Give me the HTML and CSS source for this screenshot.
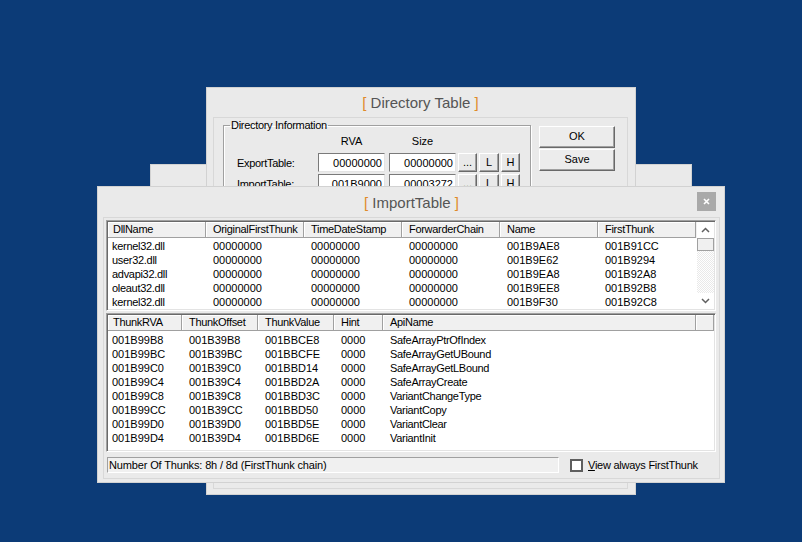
FILE: index.html
```html
<!DOCTYPE html>
<html>
<head>
<meta charset="utf-8">
<link rel="stylesheet" href="styles.css">
</head>
<body>
<div class="desktop">
  <div class="win win-back"></div>

  <div class="win win-dir">
    <div class="title"><span class="br">[</span> Directory Table <span class="br">]</span></div>
    <div class="panel dir-panel">
      <fieldset class="group">
        <legend>Directory Information</legend>
        <div class="drow dhead">
          <span class="dlabel"></span>
          <span class="dcol">RVA</span>
          <span class="dcol dcol2">Size</span>
        </div>
        <div class="drow">
          <span class="dlabel">ExportTable:</span>
          <span class="edit">00000000</span>
          <span class="edit edit2">00000000</span>
          <span class="sbtn">...</span>
          <span class="sbtn wide">L</span>
          <span class="sbtn">H</span>
        </div>
        <div class="drow">
          <span class="dlabel">ImportTable:</span>
          <span class="edit">001B9000</span>
          <span class="edit edit2">00003272</span>
          <span class="sbtn">...</span>
          <span class="sbtn wide">L</span>
          <span class="sbtn">H</span>
        </div>
      </fieldset>
      <div class="side-buttons">
        <span class="btn">OK</span>
        <span class="btn">Save</span>
      </div>
    </div>
  </div>

  <div class="win win-imp">
    <div class="title"><span class="br">[</span> ImportTable <span class="br">]</span></div>
    <span class="close"><svg width="7" height="7" viewBox="0 0 7 7"><path d="M1 1 L6 6 M6 1 L1 6" stroke="#fff" stroke-width="1.6"/></svg></span>
    <div class="panel imp-panel">
      <div class="list list-dll">
        <div class="list-body">
          <div class="lhead cols-dll">
            <span>DllName</span><span>OriginalFirstThunk</span><span>TimeDateStamp</span><span>ForwarderChain</span><span>Name</span><span>FirstThunk</span>
          </div>
          <div class="lrows">
            <div class="lrow cols-dll"><span class="txt">kernel32.dll</span><span>00000000</span><span>00000000</span><span>00000000</span><span>001B9AE8</span><span>001B91CC</span></div>
            <div class="lrow cols-dll"><span class="txt">user32.dll</span><span>00000000</span><span>00000000</span><span>00000000</span><span>001B9E62</span><span>001B9294</span></div>
            <div class="lrow cols-dll"><span class="txt">advapi32.dll</span><span>00000000</span><span>00000000</span><span>00000000</span><span>001B9EA8</span><span>001B92A8</span></div>
            <div class="lrow cols-dll"><span class="txt">oleaut32.dll</span><span>00000000</span><span>00000000</span><span>00000000</span><span>001B9EE8</span><span>001B92B8</span></div>
            <div class="lrow cols-dll"><span class="txt">kernel32.dll</span><span>00000000</span><span>00000000</span><span>00000000</span><span>001B9F30</span><span>001B92C8</span></div>
          </div>
        </div>
        <div class="vscroll">
          <span class="sarrow"><svg width="9" height="6" viewBox="0 0 9 6"><path d="M1 5 L4.5 1.5 L8 5" fill="none" stroke="#606060" stroke-width="1.5"/></svg></span>
          <span class="thumb"></span>
          <span class="track"></span>
          <span class="sarrow"><svg width="9" height="6" viewBox="0 0 9 6"><path d="M1 1 L4.5 4.5 L8 1" fill="none" stroke="#606060" stroke-width="1.5"/></svg></span>
        </div>
      </div>

      <div class="list list-thunk">
        <div class="list-body">
          <div class="lhead cols-thunk">
            <span>ThunkRVA</span><span>ThunkOffset</span><span>ThunkValue</span><span>Hint</span><span>ApiName</span><span></span>
          </div>
          <div class="lrows">
            <div class="lrow cols-thunk"><span>001B99B8</span><span>001B39B8</span><span>001BBCE8</span><span>0000</span><span class="txt">SafeArrayPtrOfIndex</span></div>
            <div class="lrow cols-thunk"><span>001B99BC</span><span>001B39BC</span><span>001BBCFE</span><span>0000</span><span class="txt">SafeArrayGetUBound</span></div>
            <div class="lrow cols-thunk"><span>001B99C0</span><span>001B39C0</span><span>001BBD14</span><span>0000</span><span class="txt">SafeArrayGetLBound</span></div>
            <div class="lrow cols-thunk"><span>001B99C4</span><span>001B39C4</span><span>001BBD2A</span><span>0000</span><span class="txt">SafeArrayCreate</span></div>
            <div class="lrow cols-thunk"><span>001B99C8</span><span>001B39C8</span><span>001BBD3C</span><span>0000</span><span class="txt">VariantChangeType</span></div>
            <div class="lrow cols-thunk"><span>001B99CC</span><span>001B39CC</span><span>001BBD50</span><span>0000</span><span class="txt">VariantCopy</span></div>
            <div class="lrow cols-thunk"><span>001B99D0</span><span>001B39D0</span><span>001BBD5E</span><span>0000</span><span class="txt">VariantClear</span></div>
            <div class="lrow cols-thunk"><span>001B99D4</span><span>001B39D4</span><span>001BBD6E</span><span>0000</span><span class="txt">VariantInit</span></div>
          </div>
        </div>
      </div>

      <div class="status-row">
        <div class="status">Number Of Thunks: 8h / 8d (FirstThunk chain)</div>
        <span class="check"></span>
        <span class="check-label"><u>V</u>iew always FirstThunk</span>
      </div>
    </div>
  </div>
</div>
</body>
</html>
```

FILE: styles.css
```css
* { box-sizing: border-box; }
html, body { margin: 0; padding: 0; }
body {
  width: 802px;
  height: 542px;
  overflow: hidden;
  background: #0c3b77;
  font-family: "Liberation Sans", Arial, sans-serif;
  font-size: 11px;
  color: #000;
}
.desktop { position: relative; width: 802px; height: 542px; }

.win {
  position: absolute;
  background: #eaeaea;
  border: 1px solid #d2d2d2;
  display: flex;
  flex-direction: column;
}
.win-back { left: 150px; top: 164px; width: 542px; height: 290px; }
.win-dir { left: 206px; top: 87px; width: 430px; height: 408px; padding: 0 7px 5px 6px; }
.win-imp { left: 97px; top: 186px; width: 628px; height: 297px; padding: 0 4px 3px 5px; }

.title {
  height: 29px;
  line-height: 30px;
  text-align: center;
  font-size: 15px;
  color: #555;
  flex: none;
}
.win-imp .title { height: 30px; line-height: 31px; }
.br { color: #e08a2a; }

.close {
  position: absolute;
  top: 5px;
  right: 8px;
  width: 19px;
  height: 19px;
  background: #a9a9a9;
  display: flex;
  align-items: center;
  justify-content: center;
}

.panel {
  flex: 1;
  border: 1px solid #d8d8d8;
  min-height: 0;
}

/* Directory panel */
.dir-panel { display: flex; align-items: flex-start; }
.group {
  margin: 1px 0 0 9px;
  width: 308px;
  height: 330px;
  padding: 0 6px;
  border: 1px solid #a0a0a0;
  box-shadow: 1px 1px 0 #fff, inset 1px 1px 0 #fff;
  min-width: 0;
}
.group legend {
  padding: 0 1px;
  line-height: 13px;
  font-size: 11px;
  letter-spacing: -0.3px;
}
.drow { display: flex; height: 19px; margin-top: 2px; }
.dhead { height: 16px; line-height: 16px; margin-top: 1px; margin-bottom: 4px; }
.dlabel { width: 88px; padding-left: 7px; line-height: 20px; letter-spacing: -0.3px; }
.dcol { width: 67px; text-align: center; }
.dcol2 { margin-left: 4px; }
.edit {
  width: 67px;
  height: 19px;
  background: #fff;
  border: 1px solid;
  border-color: #7a7a7a #e3e3e3 #e3e3e3 #7a7a7a;
  text-align: right;
  padding-right: 2px;
  line-height: 18px;
}
.edit2 { margin-left: 4px; }
.sbtn {
  width: 19px;
  height: 19px;
  margin-left: 2px;
  background: #e9e9e9;
  border: 1px solid;
  border-color: #fff #696969 #696969 #fff;
  box-shadow: inset -1px -1px 0 #a0a0a0;
  text-align: center;
  line-height: 16px;
}
.sbtn.wide { width: 20px; }

.side-buttons {
  margin: 8px 0 0 8px;
  display: flex;
  flex-direction: column;
  gap: 1px;
}
.btn {
  width: 76px;
  height: 22px;
  background: #ececec;
  border: 1px solid;
  border-color: #fff #696969 #696969 #fff;
  box-shadow: inset -1px -1px 0 #a0a0a0;
  text-align: center;
  line-height: 19px;
}

/* Import panel */
.imp-panel { display: flex; flex-direction: column; padding: 2px 3px 0 2px; }
.list {
  display: flex;
  background: #fff;
  border: 1px solid;
  border-color: #a0a0a0 #fff #fff #a0a0a0;
  box-shadow: inset 1px 1px 0 #696969, inset -1px -1px 0 #e3e3e3;
  padding: 1px;
  flex: none;
}
.list-dll { height: 91px; }
.list-thunk { height: 139px; margin-top: 2px; }
.list-body { flex: 1; min-width: 0; display: flex; flex-direction: column; }

.cols-dll { display: grid; grid-template-columns: repeat(6, 98px); }
.cols-thunk { display: grid; grid-template-columns: 74px 76px 76px 49px 313px 1fr; }

.lhead { height: 16px; margin-bottom: 1px; background: #f0f0f0; letter-spacing: -0.3px; }
.lhead span {
  border-right: 1px solid #a0a0a0;
  border-bottom: 1px solid #a0a0a0;
  box-shadow: inset 1px 1px 0 #fff;
  line-height: 15px;
  padding-left: 7px;
  white-space: nowrap;
  overflow: hidden;
}
.lhead span:first-child { padding-left: 5px; }
.list-thunk .lhead { margin-bottom: 2px; }
.lrow { height: 14px; line-height: 15px; }
.lrow span { padding-left: 7px; white-space: nowrap; }
.lrow span:first-child { padding-left: 4px; }
.lrow .txt { letter-spacing: -0.3px; }

.vscroll { width: 17px; display: flex; flex-direction: column; background: #fff; }
.sarrow { height: 16px; display: flex; align-items: center; justify-content: center; flex: none; }
.thumb { height: 13px; flex: none; background: #f0f0f0; border: 1px solid #a0a0a0; }
.track {
  flex: 1;
  background: repeating-conic-gradient(#fff 0 25%, #e9e9e9 0 50%) 0 0 / 2px 2px;
}

.status-row { display: flex; align-items: center; margin-top: 5px; height: 16px; flex: none; }
.status {
  width: 452px;
  height: 16px;
  margin-left: 1px;
  background: #f0f0f0;
  border: 1px solid;
  border-color: #a0a0a0 #fff #fff #a0a0a0;
  line-height: 14px;
  padding-left: 1px;
  white-space: nowrap;
  letter-spacing: -0.15px;
}
.check {
  width: 13px;
  height: 13px;
  margin-left: 11px;
  background: #fff;
  border: 2px solid #5e5e5e;
}
.check-label { margin-left: 5px; letter-spacing: -0.25px; }
.check-label u { text-decoration: underline; }
```
